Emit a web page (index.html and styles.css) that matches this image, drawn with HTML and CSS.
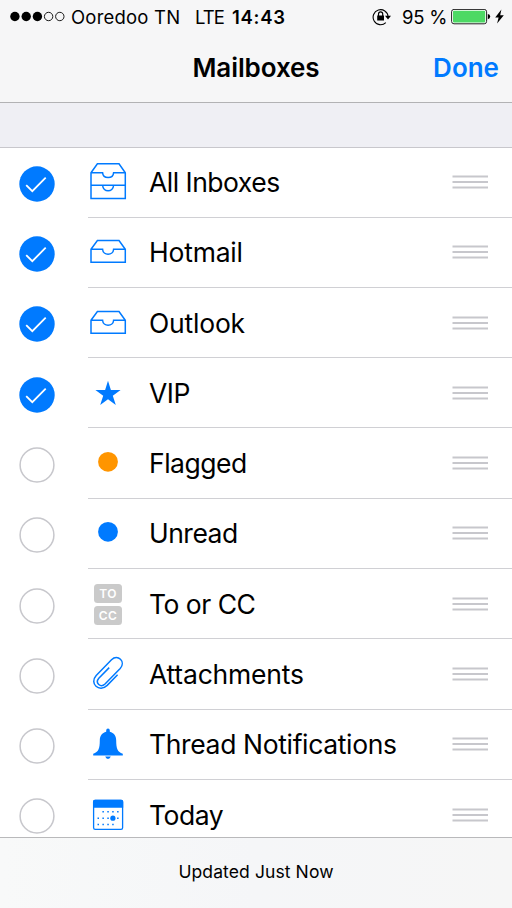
FILE: index.html
```
<!DOCTYPE html>
<html lang="en">
<head>
    <meta charset="UTF-8">
    <meta name="viewport" content="width=device-width, initial-scale=1.0">
    <title>Mailboxes</title>
    <link rel="stylesheet" href="styles.css">
</head>
<body>
    <!-- Shared icon shapes -->
    <svg class="defs" width="0" height="0">
        <symbol id="checked" viewBox="0 0 36 36">
            <circle cx="18" cy="18" r="17.7" fill="#007aff"/>
            <path d="M7.2 19.1 L13.3 25.2 L26.7 11.7" fill="none" stroke="#fff" stroke-width="1.8"/>
        </symbol>
        <symbol id="unchecked" viewBox="0 0 36 36">
            <circle cx="18" cy="18" r="16.9" fill="#fff" stroke="#c7c7cc" stroke-width="1.5"/>
        </symbol>
        <symbol id="inbox" viewBox="0 0 40 44">
            <path d="M3 19.2 L9.4 10.5 H31 L37.3 19.2 V32.2 H3 Z M3 19.2 H14.6 C15 26 25.2 26 25.6 19.2 H37.3" fill="none" stroke="#007aff" stroke-width="1.5"/>
        </symbol>
        <symbol id="grip" viewBox="0 0 36 14">
            <path d="M0.5 1.5 H36 M0.5 7 H36 M0.5 12.5 H36" stroke="#c7c7cc" stroke-width="2.2"/>
        </symbol>
    </svg>

    <div class="screen">
        <div class="header">
            <div class="status-bar">
                <svg class="signal" width="56" height="12" viewBox="0 0 56 12">
                    <circle cx="5.9" cy="5.5" r="4.7"/>
                    <circle cx="17.2" cy="5.5" r="4.7"/>
                    <circle cx="28.4" cy="5.5" r="4.7"/>
                    <circle cx="39.6" cy="5.5" r="4.2" fill="none" stroke="#000" stroke-width="0.9"/>
                    <circle cx="50.8" cy="5.5" r="4.2" fill="none" stroke="#000" stroke-width="0.9"/>
                </svg>
                <span class="carrier">Ooredoo TN</span>
                <span class="network">LTE</span>
                <span class="time">14:43</span>
                <svg class="lock" width="20" height="18" viewBox="0 0 20 18">
                    <path d="M13.8 14.6 A7.5 7.5 0 1 1 16.1 8.6" fill="none" stroke="#000" stroke-width="1.1"/>
                    <path d="M13 7.8 H19 L16 11.4 Z M5.2 7.6 H12 V12.4 H5.2 Z"/>
                    <path d="M6.5 8 V5.9 A2.1 2.1 0 0 1 10.7 5.9 V8" fill="none" stroke="#000" stroke-width="1.2"/>
                </svg>
                <span class="percent">95 %</span>
                <svg class="battery" width="40" height="16" viewBox="0 0 40 16">
                    <rect x="0.6" y="0.4" width="35" height="14.4" rx="2.4" fill="#fff" stroke="#222" stroke-width="1"/>
                    <rect x="2" y="1.8" width="32.2" height="11.6" rx="1" fill="#4cd964"/>
                    <path d="M36.8 4.9 Q39.2 5.3 39.2 7.6 T36.8 10.3 Z"/>
                </svg>
                <svg class="bolt" width="10" height="16" viewBox="0 0 10 16">
                    <path d="M6.4 0.5 L0.2 8.6 H3.6 L2.1 14.6 L8.8 6.2 H5.2 Z"/>
                </svg>
            </div>
            <div class="nav-bar">
                <h1 class="title">Mailboxes</h1>
                <a class="done">Done</a>
            </div>
        </div>

        <ul class="list">
            <li class="row">
                <svg class="check"><use href="#checked"/></svg>
                <div class="cell">
                    <svg class="icon" viewBox="0 0 40 44">
                        <path d="M3 12.8 L9.4 3.7 H31 L37.3 12.8 V38.4 H3 Z M3 12.8 H14.6 C15 19.2 25.2 19.2 25.6 12.8 H37.3 M3 25.3 H37.3 M14.6 25.3 C15 32.5 25.2 32.5 25.6 25.3" fill="none" stroke="#007aff" stroke-width="1.5"/>
                    </svg>
                    <span class="label">All Inboxes</span>
                    <svg class="grip"><use href="#grip"/></svg>
                </div>
            </li>
            <li class="row">
                <svg class="check"><use href="#checked"/></svg>
                <div class="cell">
                    <svg class="icon"><use href="#inbox"/></svg>
                    <span class="label wide">Hotmail</span>
                    <svg class="grip"><use href="#grip"/></svg>
                </div>
            </li>
            <li class="row">
                <svg class="check"><use href="#checked"/></svg>
                <div class="cell">
                    <svg class="icon"><use href="#inbox"/></svg>
                    <span class="label wide">Outlook</span>
                    <svg class="grip"><use href="#grip"/></svg>
                </div>
            </li>
            <li class="row">
                <svg class="check"><use href="#checked"/></svg>
                <div class="cell">
                    <svg class="icon" viewBox="0 0 40 44">
                        <path d="M20 9.7 L22.9 18.9 H32.6 L24.8 24.7 L27.8 34 L20 28.3 L12.2 34 L15.2 24.7 L7.4 18.9 H17.1 Z" fill="#007aff"/>
                    </svg>
                    <span class="label">VIP</span>
                    <svg class="grip"><use href="#grip"/></svg>
                </div>
            </li>
            <li class="row">
                <svg class="check"><use href="#unchecked"/></svg>
                <div class="cell">
                    <svg class="icon" viewBox="0 0 40 44"><circle cx="20" cy="20.8" r="9.9" fill="#ff9500"/></svg>
                    <span class="label">Flagged</span>
                    <svg class="grip"><use href="#grip"/></svg>
                </div>
            </li>
            <li class="row">
                <svg class="check"><use href="#unchecked"/></svg>
                <div class="cell">
                    <svg class="icon" viewBox="0 0 40 44"><circle cx="20" cy="20.8" r="9.9" fill="#007aff"/></svg>
                    <span class="label">Unread</span>
                    <svg class="grip"><use href="#grip"/></svg>
                </div>
            </li>
            <li class="row">
                <svg class="check"><use href="#unchecked"/></svg>
                <div class="cell">
                    <div class="icon tags">
                        <span class="tag">TO</span>
                        <span class="tag">CC</span>
                    </div>
                    <span class="label">To or CC</span>
                    <svg class="grip"><use href="#grip"/></svg>
                </div>
            </li>
            <li class="row">
                <svg class="check"><use href="#unchecked"/></svg>
                <div class="cell">
                    <svg class="icon" viewBox="0 0 40 44">
                        <path d="M21.2 15.6 L10.8 26.2 C6.8 31 12.6 36.2 17 32 L32.2 16.4 C38.2 9.8 29.8 1.6 23.5 7.8 L8.2 23.4 C1 31.4 11.2 41 19.2 33.4 L29.6 22.8" fill="none" stroke="#007aff" stroke-width="1.5"/>
                    </svg>
                    <span class="label wide">Attachments</span>
                    <svg class="grip"><use href="#grip"/></svg>
                </div>
            </li>
            <li class="row">
                <svg class="check"><use href="#unchecked"/></svg>
                <div class="cell">
                    <svg class="icon" viewBox="0 0 40 44">
                        <path d="M18.2 9.8 V8.4 A1.8 1.8 0 0 1 21.8 8.4 V9.8 C26 10.8 28.2 14 28.2 18.5 C28.2 26.5 29.5 30 34.8 31.8 V33.5 H5.2 V31.8 C10.5 30 11.8 26.5 11.8 18.5 C11.8 14 14 10.8 18.2 9.8 Z M17.2 34.6 H22.8 Q22 37 20 37 T17.2 34.6 Z" fill="#007aff"/>
                    </svg>
                    <span class="label thread">Thread Notifications</span>
                    <svg class="grip"><use href="#grip"/></svg>
                </div>
            </li>
            <li class="row">
                <svg class="check"><use href="#unchecked"/></svg>
                <div class="cell">
                    <svg class="icon" viewBox="0 0 40 44">
                        <rect x="5.6" y="7.4" width="29" height="28.9" rx="1.6" fill="#fff" stroke="#007aff" stroke-width="1.3"/>
                        <path d="M5 14.7 V8.4 Q5 6.7 6.7 6.7 H33.5 Q35.2 6.7 35.2 8.4 V14.7 Z" fill="#007aff"/>
                        <path d="M14.4 18.8 H31 M9.5 25.2 H31 M9.5 31.6 H26" fill="none" stroke="#007aff" stroke-width="1.5" stroke-dasharray="1.5 3.4"/>
                        <circle cx="24.9" cy="25.2" r="2.6" fill="#007aff"/>
                    </svg>
                    <span class="label">Today</span>
                    <svg class="grip"><use href="#grip"/></svg>
                </div>
            </li>
        </ul>

        <div class="footer">Updated Just Now</div>
    </div>
</body>
</html>
```
FILE: styles.css
```
* {
    box-sizing: border-box;
}
body {
    margin: 0;
    font-family: Inter, "Liberation Sans", Arial, sans-serif;
    color: #000;
    background-color: #efeff4;
}
svg {
    display: block;
    flex: none;
}
.defs {
    position: absolute;
}
.screen {
    display: flex;
    flex-direction: column;
    width: 512px;
    height: 908px;
    overflow: hidden;
}
.header {
    flex: none;
    height: 103px;
    background-color: #f6f6f7;
    border-bottom: 1px solid #b2b2b4;
}
.status-bar {
    display: flex;
    align-items: center;
    height: 33px;
    padding-left: 9px;
    font-size: 18.5px;
    white-space: nowrap;
}
.carrier {
    width: 110px;
    margin-left: 6px;
    letter-spacing: 0.2px;
}
.network {
    width: 37px;
    margin-left: 14px;
    letter-spacing: -0.9px;
}
.time {
    width: 56px;
    font-weight: 600;
    letter-spacing: 0.7px;
}
.lock {
    margin-left: 84px;
}
.percent {
    width: 48px;
    margin-left: 10px;
    letter-spacing: -0.2px;
}
.battery {
    margin-left: 1px;
}
.bolt {
    margin-left: 4px;
}
.nav-bar {
    display: grid;
    grid-template-columns: 1fr auto 1fr;
    align-items: center;
    height: 69px;
    padding-right: 13px;
    padding-left: 13px;
}
.title {
    grid-column: 2;
    margin: 0;
    font-size: 26px;
    font-weight: 600;
    letter-spacing: -0.1px;
}
.done {
    justify-self: end;
    color: #007aff;
    font-size: 26px;
    font-weight: 600;
}
.list {
    flex: 1;
    min-height: 0;
    margin: 44px 0 0;
    padding: 0;
    overflow: hidden;
    list-style: none;
    background-color: #fff;
    border-top: 1px solid #c8c7cc;
}
.row {
    display: flex;
    height: 70.3px;
}
.row:first-child {
    height: 69.6px;
}
.row:first-child .check {
    margin-top: 17.7px;
}
.check {
    width: 36px;
    height: 36px;
    margin: 18.5px 33.2px 0 18.8px;
}
.cell {
    display: flex;
    flex: 1;
    align-items: center;
    padding-right: 24px;
    border-bottom: 1px solid #d0d0d4;
}
.icon {
    width: 40px;
    height: 44px;
}
.label {
    flex: 1;
    margin-left: 21px;
    font-size: 26.5px;
    letter-spacing: -0.5px;
    white-space: nowrap;
}
.wide {
    letter-spacing: -0.2px;
}
.thread {
    letter-spacing: -0.35px;
}
.grip {
    width: 36px;
    height: 14px;
}
.tags {
    display: flex;
    flex-direction: column;
    gap: 3px;
    align-items: center;
    padding-top: 2px;
}
.tag {
    width: 28px;
    height: 19px;
    border-radius: 3.5px;
    background-color: #cacaca;
    color: #fff;
    font-size: 12px;
    font-weight: 600;
    line-height: 19px;
    text-align: center;
    letter-spacing: 0.4px;
}
.footer {
    flex: none;
    height: 71px;
    border-top: 1px solid #b9b9bb;
    background: linear-gradient(90deg, #f8f9f9, #f5f6f8 50%, #f6f6f6);
    font-size: 17.5px;
    line-height: 68px;
    text-align: center;
    letter-spacing: 0.1px;
}
```
